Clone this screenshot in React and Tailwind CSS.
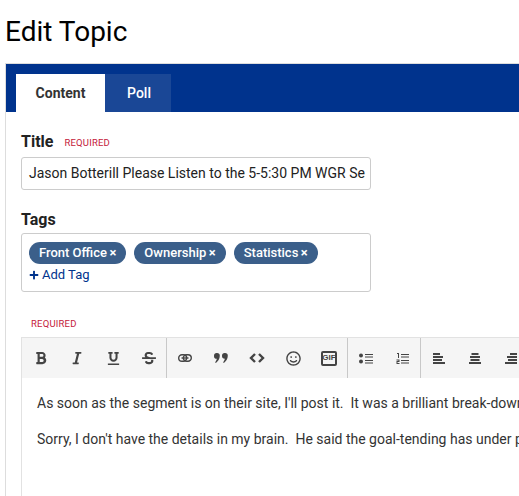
import { FaBold, FaItalic, FaUnderline, FaStrikethrough, FaRegSmile, FaPlus } from "react-icons/fa";

function LinkIcon() {
  return (
    <svg width="14" height="8" viewBox="0 0 14 8" fill="none" stroke="#444" strokeWidth="1.4">
      <rect x="0.7" y="0.7" width="8" height="6.600" rx="3.300" />
      <rect x="5.300" y="0.7" width="8" height="6.600" rx="3.300" />
      <path d="M3.500 4h7" />
    </svg>
  );
}

function QuoteIcon() {
  return (
    <svg width="14" height="10" viewBox="0 0 14 10" fill="#444">
      <path d="M3 0a2.800 2.800 0 0 1 2.800 2.800c0 3-1.800 5.700-3.900 7.200l-.8-.8c.9-1 1.500-2 1.700-3.400A2.800 2.800 0 0 1 3 0z" />
      <path d="M11 0a2.800 2.800 0 0 1 2.800 2.800c0 3-1.800 5.700-3.900 7.200l-.8-.8c.9-1 1.500-2 1.700-3.400A2.800 2.800 0 0 1 11 0z" />
    </svg>
  );
}

function CodeIcon() {
  return (
    <svg width="16" height="10" viewBox="0 0 16 10" fill="none" stroke="#444" strokeWidth="2.400">
      <path d="M6 1 2 5l4 4M10 1l4 4-4 4" />
    </svg>
  );
}

function BulletIcon() {
  return (
    <svg width="14" height="11" viewBox="0 0 14 11" fill="#444">
      <circle cx="2" cy="2.500" r="2" />
      <circle cx="2" cy="8.500" r="2" />
      <path d="M6 1h8v1H6zM6 3.500h8v1H6zM6 7h8v1H6zM6 9.500h8v1H6z" />
    </svg>
  );
}

function NumberIcon() {
  return (
    <svg width="13" height="11" viewBox="0 0 13 11" fill="#444">
      <path d="M1 0h2v5H2V1H1zM0.500 6.500h3v2.500h-2v1h2v1h-3V8h2V7.500h-2z" />
      <path d="M5 1h8v1H5zM5 3.500h8v1H5zM5 7h8v1H5zM5 9.500h8v1H5z" />
    </svg>
  );
}

function AlignIcon({ d }) {
  return (
    <svg width="12" height="11" viewBox="0 0 12 11" fill="#444">
      <path d={d} />
    </svg>
  );
}

function Tag({ name }) {
  return (
    <span className="h-[22px] px-[10px] rounded-full bg-[#3b5f8a] text-white text-[13px] font-medium flex items-center whitespace-nowrap">
      {name}<span className="ml-[2.500px] font-bold text-[13px]">×</span>
    </span>
  );
}

function Tool({ children, w = "w-[36px]", divider }) {
  return (
    <div className={`h-full ${w} shrink-0 flex items-center justify-center text-[#444] ${divider ? "border-r border-[#c8c8c8]" : ""}`}>
      {children}
    </div>
  );
}

export default function App() {
  return (
    <div className="w-[519px] h-[496px] overflow-hidden bg-white text-[#222] font-['Roboto',sans-serif]">
      <h1 className="pl-[5px] pt-[15px] h-[63px] text-[28px] leading-[34px] text-black">Edit Topic</h1>
      <div className="ml-[5px] w-[600px] border-l border-t border-[#ddd] h-full">
        <div className="h-[48px] bg-[#00338d] pt-[10px] pl-[10px] flex">
          <div className="w-[89px] bg-white text-[#333] text-[14px] font-bold flex items-center justify-center">Content</div>
          <div className="w-[66px] pl-[2px] bg-[#1a4796] text-white text-[14px] font-medium flex items-center justify-center">Poll</div>
        </div>
        <div className="pl-[15px] pt-[21px]">
          <div className="flex items-center h-[18px]">
            <span className="text-[16px] font-bold text-[#222]">Title</span>
            <span className="ml-[11px] pt-[3px] text-[9.5px] text-[#c4193b] tracking-[0.2px]">REQUIRED</span>
          </div>
          <div className="mt-[6px] w-[350px] h-[33px] border border-[#ccc] rounded-[3px] pl-[7px] pr-[4px] flex items-center overflow-hidden">
            <span className="text-[14px] whitespace-nowrap text-[#222]">Jason Botterill Please Listen to the 5-5:30 PM WGR Se</span>
          </div>
          <div className="mt-[21px] h-[18px] flex items-center text-[16px] font-bold">Tags</div>
          <div className="mt-[4px] w-[350px] h-[59px] border border-[#ccc] rounded-[3px] pl-[7px] pt-[8px]">
            <div className="flex gap-2">
              <Tag name="Front Office" />
              <Tag name="Ownership" />
              <Tag name="Statistics" />
            </div>
            <div className="flex items-center h-[22px] text-[13px] text-[#00338d]">
              <FaPlus size={10} className="mr-[3px]" />Add Tag
            </div>
          </div>
          <div className="mt-[26px] pl-[10px] h-[12px] flex items-center text-[9.5px] text-[#c4193b] tracking-[0.2px]">REQUIRED</div>
          <div className="mt-[7px] border-l border-t border-[#e2e2e2] h-[200px]">
            <div className="h-[40px] bg-[#f5f5f5] flex pl-[1px]">
              <Tool><FaBold size={14} /></Tool>
              <Tool><FaItalic size={14} /></Tool>
              <Tool><FaUnderline size={13} /></Tool>
              <Tool divider><FaStrikethrough size={14} /></Tool>
              <Tool><LinkIcon /></Tool>
              <Tool><QuoteIcon /></Tool>
              <Tool><CodeIcon /></Tool>
              <Tool><FaRegSmile size={15} /></Tool>
              <Tool w="w-[37px]" divider>
                <span className="w-[16px] h-[15px] border-2 border-[#444] rounded-[2px] flex items-center justify-center text-[8px] font-bold leading-none font-['Liberation_Sans',sans-serif]">GIF</span>
              </Tool>
              <Tool><BulletIcon /></Tool>
              <Tool w="w-[37px]" divider><NumberIcon /></Tool>
              <Tool><AlignIcon d="M0 0h7v2H0zM0 3h10v2H0zM0 6h9v2H0zM0 9h12v2H0z" /></Tool>
              <Tool><AlignIcon d="M2.500 0h7v2h-7zM1 3h10v2H1zM1.500 6h9v2h-9zM0 9h12v2H0z" /></Tool>
              <Tool><AlignIcon d="M5 0h7v2H5zM2 3h10v2H2zM3 6h9v2H3zM0 9h12v2H0z" /></Tool>
            </div>
            <div className="pl-[15px] pt-[15px] text-[14px] text-[#333] whitespace-pre leading-[20px]">
              <p>As soon as the segment is on their site, I'll post it.  It was a brilliant break-down of the whole thing</p>
              <p className="mt-[16px]">Sorry, I don't have the details in my brain.  He said the goal-tending has under performed</p>
            </div>
          </div>
        </div>
      </div>
    </div>
  );
}
